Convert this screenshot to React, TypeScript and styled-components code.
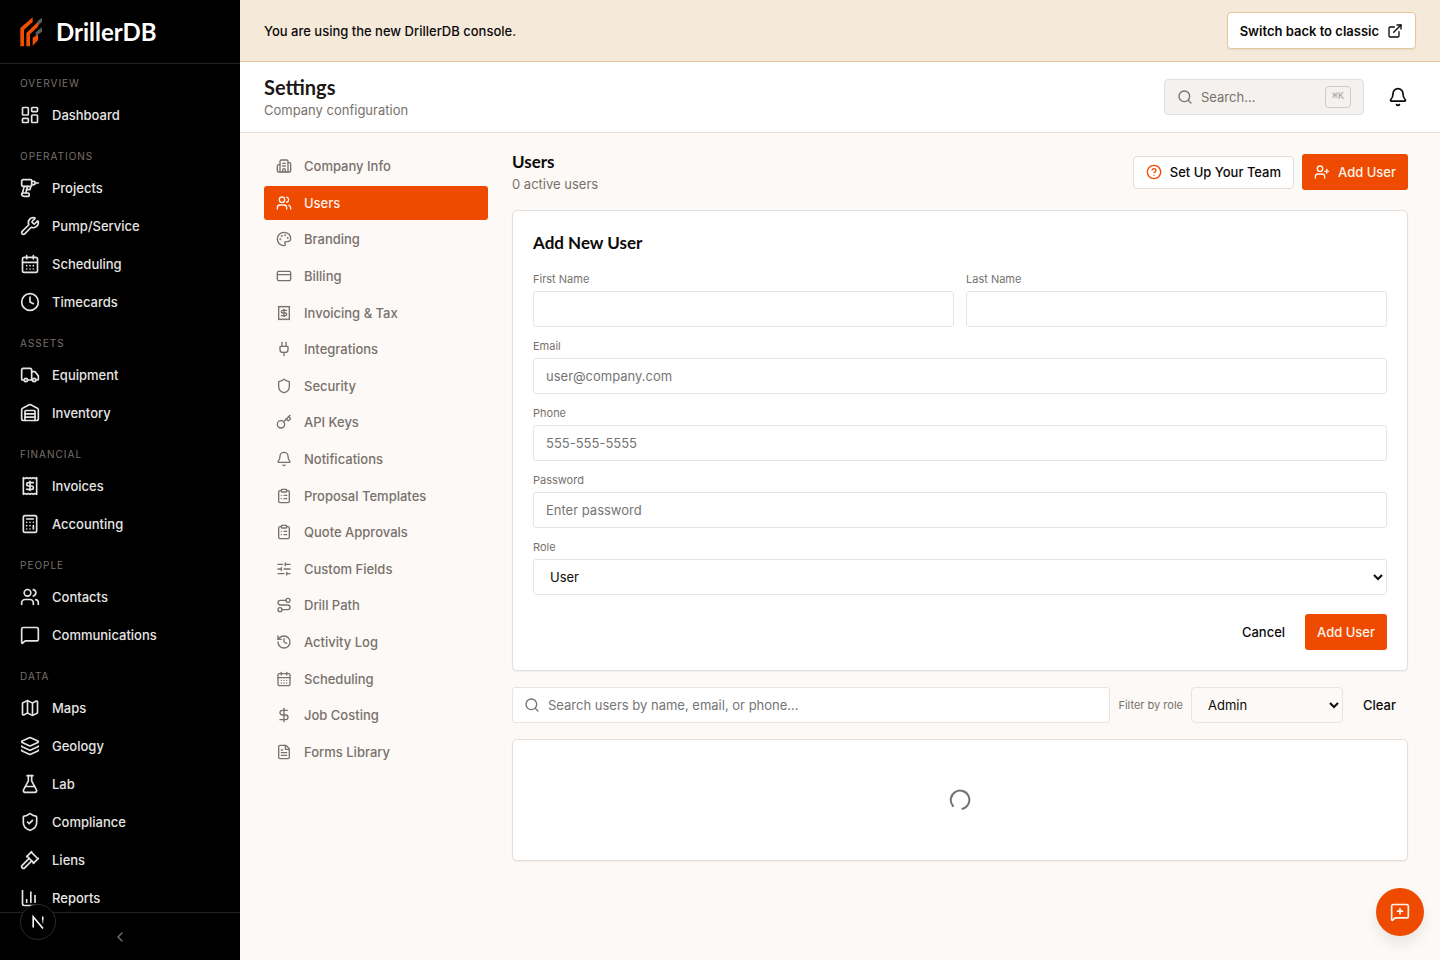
import React from "react";
import styled, { createGlobalStyle, css } from "styled-components";
import {
  Bell, Building2, Calculator, CalendarDays, ChartColumn, ChevronLeft, CircleQuestionMark,
  ClipboardList, Clock, CreditCard, DollarSign, Drill, ExternalLink, FileText, FlaskConical,
  Gavel, History, Key, Layers, LayoutDashboard, Map, MessageSquare, MessageSquarePlus,
  Palette, Plug, Receipt, Route, Search, Shield, ShieldCheck, SlidersHorizontal, Truck,
  UserPlus, Users, Warehouse, Wrench,
} from "lucide-react";

const color = {
  accent: "#ee4b00",
  page: "#fdf9f6",
  text: "#0c0a09",
  muted: "#78716c",
  line: "#e2dfdc",
  field: "#e5e5e5",
};

const bodyFont = `Inter, "Liberation Sans", sans-serif`;
const headFont = `Lato, Inter, sans-serif`;

const GlobalStyle = createGlobalStyle`
  *, *::before, *::after { box-sizing: border-box; }
  body {
    margin: 0;
    background: ${color.page};
    color: ${color.text};
    font: 400 13px/20px ${bodyFont};
  }
  button, input, select { font: inherit; color: inherit; margin: 0; }
  button { cursor: pointer; }
  a { color: inherit; text-decoration: none; }
  h1, h2, h3, p { margin: 0; padding: 0; }
  svg { flex: none; display: block; }
`;

const Shell = styled.div`
  display: grid;
  grid-template-columns: 240px minmax(0, 1fr);
  min-height: 100vh;
`;

const Sidebar = styled.aside`
  position: sticky;
  top: 0;
  height: 100vh;
  display: flex;
  flex-direction: column;
  background: #000;
  color: #e7e5e4;
`;

const Brand = styled.a`
  display: flex;
  align-items: center;
  gap: 14px;
  height: 64px;
  padding: 0 20px;
  border-bottom: 1px solid #222;
  color: #fff;
  font: 700 24px/32px ${headFont};
`;

const SideNav = styled.nav`
  flex: 1;
  min-height: 0;
  overflow: hidden;
  padding: 12px 0;
`;

const Group = styled.section`
  margin-bottom: 15px;
`;

const GroupLabel = styled.h2`
  padding: 0 20px;
  margin-bottom: 5px;
  color: #78716c;
  font: 400 10px/15px ${bodyFont};
  letter-spacing: 1px;
  text-transform: uppercase;
`;

const SideLink = styled.a`
  display: flex;
  align-items: center;
  gap: 12px;
  height: 38px;
  padding: 0 20px;
  font-weight: 500;
`;

const SideFooter = styled.div`
  display: flex;
  justify-content: center;
  height: 48px;
  border-top: 1px solid #222;
`;

const CollapseButton = styled.button`
  display: grid;
  place-items: center;
  flex: 1;
  border: 0;
  background: none;
  color: #78716c;
`;

const DevBadge = styled.button`
  position: fixed;
  left: 20px;
  bottom: 20px;
  display: grid;
  place-items: center;
  width: 36px;
  height: 36px;
  padding: 0;
  border: 1px solid #2c2c2c;
  border-radius: 50%;
  background: #000;
`;

const Banner = styled.div`
  display: flex;
  align-items: center;
  justify-content: space-between;
  height: 62px;
  padding: 0 24px;
  background: #f5e9da;
  border-bottom: 1px solid #e6c79c;
  font-weight: 500;
`;

const Button = styled.button<{ $kind?: "primary" | "outline" | "ghost"; $warm?: boolean; $small?: boolean }>`
  display: inline-flex;
  align-items: center;
  gap: 8px;
  height: ${(p) => (p.$small ? 33 : 36)}px;
  padding: 0 12px;
  border: 0;
  border-radius: 3px;
  background: none;
  font-weight: 500;
  white-space: nowrap;
  ${(p) => p.$kind === "primary" && css`
    background: ${color.accent};
    color: #fdf3ec;
  `}
  ${(p) => p.$kind === "outline" && css`
    background: #fff;
    border: 1px solid ${p.$warm ? "#e6c79c" : color.line};
    border-radius: 4px;
  `}
  ${(p) => p.$warm && css`
    height: 37px;
    font-weight: 600;
    box-shadow: 0 1px 2px rgba(0, 0, 0, 0.06);
  `}
`;

const TopBar = styled.header`
  display: flex;
  align-items: center;
  justify-content: space-between;
  height: 71px;
  padding: 0 24px;
  background: #fff;
  border-bottom: 1px solid #e2e0de;
`;

const PageTitle = styled.h1`
  font: 700 20px/25px ${headFont};
  color: #1c1917;
`;

const Muted = styled.p`
  color: ${color.muted};
`;

const TopTools = styled.div`
  display: flex;
  align-items: center;
  gap: 16px;
`;

const SearchTrigger = styled.button`
  display: flex;
  align-items: center;
  gap: 8px;
  width: 200px;
  height: 36px;
  padding: 0 12px;
  border: 1px solid #e2dfdd;
  border-radius: 4px;
  background: #f5f1ee;
  color: ${color.muted};
  text-align: left;
`;

const Grow = styled.span`
  flex: 1;
`;

const Kbd = styled.kbd`
  height: 22px;
  padding: 0 6px;
  border: 1px solid #cfcac6;
  border-radius: 4px;
  color: #a8a29e;
  font: 400 10px/20px "Liberation Mono", "DejaVu Sans Mono", monospace;
`;

const IconButton = styled.button`
  display: grid;
  place-items: center;
  width: 36px;
  height: 36px;
  padding: 0;
  border: 0;
  background: none;
`;

const Content = styled.div`
  display: grid;
  grid-template-columns: 224px minmax(0, 1fr);
  align-items: start;
  gap: 24px;
  padding: 16px 32px 24px 24px;
`;

const SettingsNav = styled.nav`
  display: flex;
  flex-direction: column;
  gap: 2px;
  height: 620px;
`;

const SettingsLink = styled.a<{ $active?: boolean }>`
  flex: 1;
  display: flex;
  align-items: center;
  gap: 12px;
  padding: 0 12px;
  border-radius: 3px;
  font-weight: 500;
  color: ${(p) => (p.$active ? "#fdf3ec" : color.muted)};
  background: ${(p) => (p.$active ? color.accent : "transparent")};
`;

const Panel = styled.main`
  display: flex;
  flex-direction: column;
  gap: 16px;
`;

const PanelHead = styled.div`
  display: flex;
  align-items: center;
  justify-content: space-between;
  padding-top: 1px;
`;

const SectionTitle = styled.h2`
  font: 700 17px/24px ${headFont};
`;

const Actions = styled.div`
  display: flex;
  align-items: center;
  gap: 8px;
`;

const Card = styled.section`
  padding: 20px;
  background: #fff;
  border: 1px solid ${color.line};
  border-radius: 5px;
  box-shadow: 0 1px 2px rgba(0, 0, 0, 0.06);
`;

const UserForm = styled.form`
  display: flex;
  flex-direction: column;
  gap: 12px;
  padding-top: 17px;
`;

const NameRow = styled.div`
  display: grid;
  grid-template-columns: 1fr 1fr;
  gap: 12px;
`;

const Field = styled.div`
  display: flex;
  flex-direction: column;
  gap: 4px;
`;

const Label = styled.label`
  color: ${color.muted};
  font-size: 11px;
  line-height: 15px;
  white-space: nowrap;
`;

const fieldBox = css`
  height: 36px;
  border: 1px solid ${color.field};
  border-radius: 3px;
  background: #fff;
`;

const TextInput = styled.input`
  ${fieldBox}
  width: 100%;
  padding: 0 12px;
  &::placeholder { color: #757575; opacity: 1; }
`;

const Select = styled.select<{ $plain?: boolean }>`
  ${fieldBox}
  width: ${(p) => (p.$plain ? "152px" : "100%")};
  padding: 0 0 0 12px;
  ${(p) => p.$plain && css`
    background: transparent;
    border-radius: 4px;
  `}
`;

const FormFooter = styled.div`
  display: flex;
  justify-content: flex-end;
  gap: 8px;
  padding-top: 7px;
`;

const FilterRow = styled.div`
  display: flex;
  align-items: center;
  gap: 8px;
`;

const SearchBox = styled.div`
  ${fieldBox}
  flex: 1;
  display: flex;
  align-items: center;
  gap: 8px;
  padding: 0 11px;
  color: ${color.muted};
`;

const BareInput = styled.input`
  flex: 1;
  min-width: 0;
  padding: 0;
  border: 0;
  outline: 0;
  background: none;
  &::placeholder { color: #757575; opacity: 1; }
`;

const LoadingCard = styled(Card)`
  display: grid;
  place-items: center;
  height: 122px;
`;

const Spinner = styled.svg`
  color: ${color.muted};
`;

const ChatButton = styled.button`
  position: fixed;
  right: 16px;
  bottom: 24px;
  display: grid;
  place-items: center;
  width: 48px;
  height: 48px;
  padding: 0;
  border: 0;
  border-radius: 50%;
  background: ${color.accent};
  color: #fdf3ec;
  box-shadow: 0 8px 14px rgba(0, 0, 0, 0.08);
`;

const groups = [
  { label: "Overview", items: [["Dashboard", LayoutDashboard]] },
  { label: "Operations", items: [["Projects", Drill], ["Pump/Service", Wrench], ["Scheduling", CalendarDays], ["Timecards", Clock]] },
  { label: "Assets", items: [["Equipment", Truck], ["Inventory", Warehouse]] },
  { label: "Financial", items: [["Invoices", Receipt], ["Accounting", Calculator]] },
  { label: "People", items: [["Contacts", Users], ["Communications", MessageSquare]] },
  { label: "Data", items: [["Maps", Map], ["Geology", Layers], ["Lab", FlaskConical], ["Compliance", ShieldCheck], ["Liens", Gavel], ["Reports", ChartColumn]] },
] as { label: string; items: [string, React.ElementType][] }[];

const settings: [string, React.ElementType][] = [
  ["Company Info", Building2],
  ["Users", Users],
  ["Branding", Palette],
  ["Billing", CreditCard],
  ["Invoicing & Tax", Receipt],
  ["Integrations", Plug],
  ["Security", Shield],
  ["API Keys", Key],
  ["Notifications", Bell],
  ["Proposal Templates", ClipboardList],
  ["Quote Approvals", ClipboardList],
  ["Custom Fields", SlidersHorizontal],
  ["Drill Path", Route],
  ["Activity Log", History],
  ["Scheduling", CalendarDays],
  ["Job Costing", DollarSign],
  ["Forms Library", FileText],
];

const Logo = () => (
  <svg width="22" height="30" viewBox="0 0 66 90" aria-hidden="true">
    <g fill="#f04e00">
      <path d="M1 33 38 1v14L12 38v50H1Z" />
      <path d="M19 48 54 14v15L30 52v36H19Z" />
      <path d="M38 62 54 52v17L38 87Z" />
    </g>
    <g fill="#5b5b5b">
      <path d="m53 12 13-10v12L54 27Z" />
      <path d="m47 46 19-15v13L47 58Z" />
    </g>
  </svg>
);

export default function App() {
  return (
    <>
      <GlobalStyle />
      <Shell>
        <Sidebar>
          <Brand href="#"><Logo />DrillerDB</Brand>
          <SideNav aria-label="Main">
            {groups.map((g) => (
              <Group key={g.label}>
                <GroupLabel>{g.label}</GroupLabel>
                {g.items.map(([name, Icon]) => (
                  <SideLink href="#" key={name}><Icon size={20} />{name}</SideLink>
                ))}
              </Group>
            ))}
          </SideNav>
          <SideFooter>
            <CollapseButton aria-label="Collapse sidebar"><ChevronLeft size={16} /></CollapseButton>
          </SideFooter>
        </Sidebar>
        <div>
          <Banner>
            <p>You are using the new DrillerDB console.</p>
            <Button $kind="outline" $warm>Switch back to classic<ExternalLink size={16} /></Button>
          </Banner>
          <TopBar>
            <div>
              <PageTitle>Settings</PageTitle>
              <Muted>Company configuration</Muted>
            </div>
            <TopTools>
              <SearchTrigger>
                <Search size={16} /><Grow>Search...</Grow><Kbd>⌘K</Kbd>
              </SearchTrigger>
              <IconButton aria-label="Notifications"><Bell size={20} /></IconButton>
            </TopTools>
          </TopBar>
          <Content>
            <SettingsNav aria-label="Settings">
              {settings.map(([name, Icon]) => (
                <SettingsLink href="#" key={name} $active={name === "Users"}>
                  <Icon size={16} />{name}
                </SettingsLink>
              ))}
            </SettingsNav>
            <Panel>
              <PanelHead>
                <div>
                  <SectionTitle>Users</SectionTitle>
                  <Muted>0 active users</Muted>
                </div>
                <Actions>
                  <Button $kind="outline" $small><CircleQuestionMark size={16} color={color.accent} />Set Up Your Team</Button>
                  <Button $kind="primary"><UserPlus size={16} />Add User</Button>
                </Actions>
              </PanelHead>
              <Card>
                <SectionTitle>Add New User</SectionTitle>
                <UserForm onSubmit={(e) => e.preventDefault()}>
                  <NameRow>
                    <Field><Label htmlFor="first">First Name</Label><TextInput id="first" /></Field>
                    <Field><Label htmlFor="last">Last Name</Label><TextInput id="last" /></Field>
                  </NameRow>
                  <Field><Label htmlFor="email">Email</Label><TextInput id="email" type="email" placeholder="user@company.com" /></Field>
                  <Field><Label htmlFor="phone">Phone</Label><TextInput id="phone" type="tel" placeholder="555-555-5555" /></Field>
                  <Field><Label htmlFor="password">Password</Label><TextInput id="password" type="password" placeholder="Enter password" /></Field>
                  <Field>
                    <Label htmlFor="role">Role</Label>
                    <Select id="role"><option>User</option><option>Admin</option></Select>
                  </Field>
                  <FormFooter>
                    <Button type="button">Cancel</Button>
                    <Button $kind="primary" type="submit">Add User</Button>
                  </FormFooter>
                </UserForm>
              </Card>
              <FilterRow>
                <SearchBox>
                  <Search size={16} />
                  <BareInput type="search" aria-label="Search users" placeholder="Search users by name, email, or phone..." />
                </SearchBox>
                <Label htmlFor="filter">Filter by role</Label>
                <Select id="filter" $plain><option>Admin</option><option>User</option></Select>
                <Button>Clear</Button>
              </FilterRow>
              <LoadingCard aria-label="Loading users">
                <Spinner width="22" height="22" viewBox="0 0 22 22" fill="none" stroke="currentColor" strokeWidth="2" strokeLinecap="round">
                  <path d="M4 17A9.300 9.300 0 1 1 13.500 19.900" />
                </Spinner>
              </LoadingCard>
            </Panel>
          </Content>
        </div>
      </Shell>
      <DevBadge aria-label="Open developer tools">
        <svg width="14" height="14" viewBox="0 0 14 14" fill="none" strokeWidth="1.600">
          <defs>
            <linearGradient id="fade" x1="0" y1="0" x2="0" y2="1">
              <stop offset="0.300" stopColor="#fff" />
              <stop offset="1" stopColor="#fff" stopOpacity="0" />
            </linearGradient>
          </defs>
          <path d="M2.200 12.500V1.800L12 13.500" stroke="#fff" />
          <path d="M11 1.500h1.500v8H11Z" fill="url(#fade)" />
        </svg>
      </DevBadge>
      <ChatButton aria-label="Send feedback"><MessageSquarePlus size={20} /></ChatButton>
    </>
  );
}
